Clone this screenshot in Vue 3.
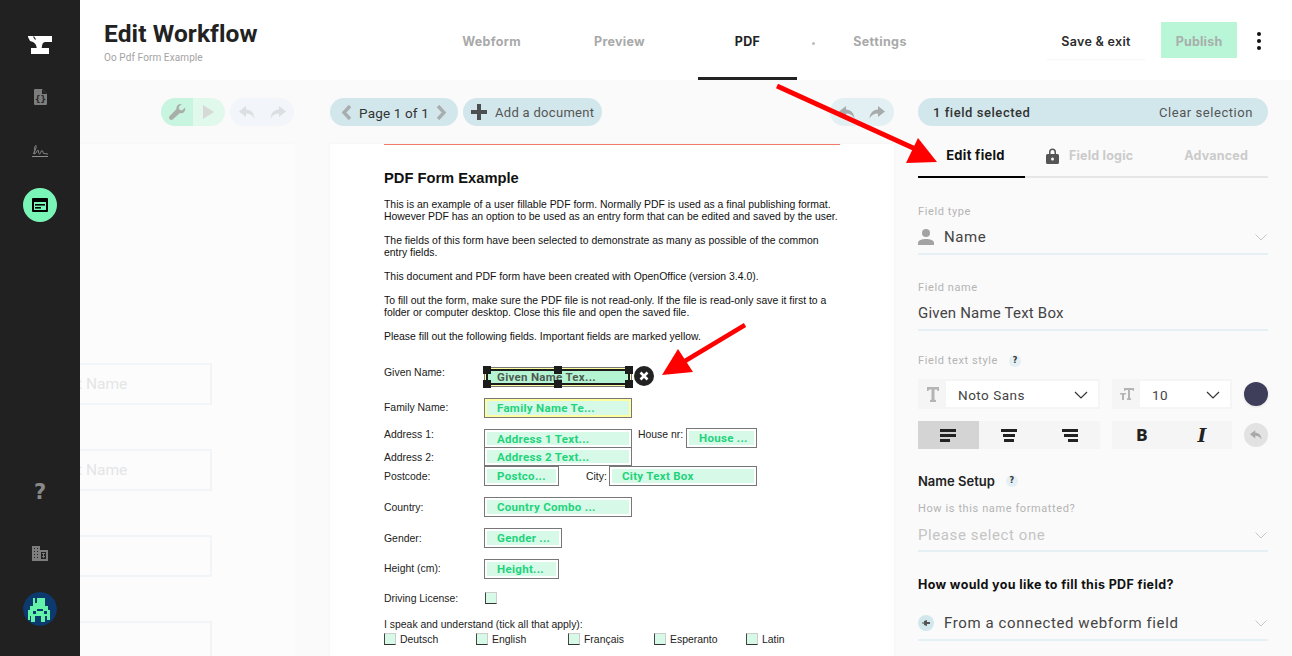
<script setup>
const tabs = [
  { label: 'Webform', cls: '' },
  { label: 'Preview', cls: '' },
  { label: 'PDF', cls: 'active' },
  { label: 'Settings', cls: 'last' }
]
const fields = [
  { t: 'Family Name Te...', x: 154, y: 254, w: 148, h: 20, yellow: true },
  { t: 'Address 1 Text...', x: 154, y: 285, w: 148, h: 19 },
  { t: 'House ...', x: 356, y: 284, w: 71, h: 20 },
  { t: 'Address 2 Text...', x: 154, y: 303, w: 148, h: 19 },
  { t: 'Postco...', x: 154, y: 322, w: 75, h: 20 },
  { t: 'City Text Box', x: 279, y: 322, w: 148, h: 20 },
  { t: 'Country Combo ...', x: 154, y: 353, w: 148, h: 20 },
  { t: 'Gender ...', x: 154, y: 384, w: 78, h: 20 },
  { t: 'Height...', x: 154, y: 415, w: 75, h: 20 }
]
const labels = [
  { t: 'Given Name:', x: 54, y: 223 },
  { t: 'Family Name:', x: 54, y: 258 },
  { t: 'Address 1:', x: 54, y: 285 },
  { t: 'House nr:', x: 308, y: 285 },
  { t: 'Address 2:', x: 54, y: 308 },
  { t: 'Postcode:', x: 54, y: 327 },
  { t: 'City:', x: 256, y: 327 },
  { t: 'Country:', x: 54, y: 358 },
  { t: 'Gender:', x: 54, y: 389 },
  { t: 'Height (cm):', x: 54, y: 419 },
  { t: 'Driving License:', x: 54, y: 449 },
  { t: 'I speak and understand (tick all that apply):', x: 54, y: 475 },
  { t: 'Deutsch', x: 70, y: 490 },
  { t: 'English', x: 162, y: 490 },
  { t: 'Français', x: 254, y: 490 },
  { t: 'Esperanto', x: 340, y: 490 },
  { t: 'Latin', x: 432, y: 490 }
]
const checks = [
  { x: 155, y: 448 }, { x: 54, y: 489 }, { x: 146, y: 489 },
  { x: 238, y: 489 }, { x: 324, y: 489 }, { x: 416, y: 489 }
]
const handles = [
  [153, 222], [224, 222], [295, 222], [153, 236], [224, 236], [295, 236]
]
const place = (o) => ({ left: o.x + 'px', top: o.y + 'px' })
const box = (f) => ({ left: f.x + 'px', top: f.y + 'px', width: f.w + 'px', height: f.h + 'px' })
</script>

<template>
  <div class="app">
    <aside class="rail">
      <div class="rail-top">
        <svg class="logo" width="24" height="18" viewBox="0 0 24 18"><path d="M0 0H24V6H17C15 6 14 8 13.700 12H21V18H3V12H8.700C8.500 9 7 7 5 6L2 5L0 1Z" fill="#fff"/><path d="M5.500 .5L7.500 3.500" stroke="#212121" stroke-width="1.200"/></svg>
        <svg class="r-ico" width="13" height="16" viewBox="0 0 13 16"><path d="M1 0h7l5 5v10a1 1 0 0 1-1 1H1a1 1 0 0 1-1-1V1a1 1 0 0 1 1-1z" fill="#7d7d7d"/><path d="M8 0v5h5z" fill="#222"/><text x="6.5" y="13" text-anchor="middle" class="brace">{}</text></svg>
        <svg class="r-ico sig" width="16" height="12" viewBox="0 0 16 12"><path d="M1 9C3 7 5 1 4 .5S2 4 2.500 9C4 9 5 5 6 5s0 4 1.500 4S8.500 5.500 10 5.500s.5 3.500 2 3L16 9" fill="none" stroke="#8d8d8d" stroke-width=".9"/><path d="M0 11.500h16" stroke="#8d8d8d"/></svg>
        <div class="r-active">
          <svg width="16" height="14" viewBox="0 0 16 14"><rect width="16" height="14" rx="1" fill="#000"/><rect x="2" y="4" width="12" height="8" fill="#7af5b8"/><rect x="3" y="6" width="10" height="1.600" fill="#000"/><rect x="3" y="9" width="6" height="1.600" fill="#000"/></svg>
        </div>
      </div>
      <div class="rail-bottom">
        <span class="q">?</span>
        <svg class="bld" width="16" height="15" viewBox="0 0 16 15"><path d="M0 0h8v4h8v11H0z" fill="#7d7d7d"/><path d="M2 2h1v1H2zM5 2h1v1H5zM2 5h1v1H2zM5 5h1v1H5zM2 8h1v1H2zM5 8h1v1H5zM2 11h1v1H2zM5 11h1v1H5zM9 6h5v7H9z" fill="#222"/><path d="M10 7h3v1h-3zM10 10h3v1h-3zM11 7h1v5h-1z" fill="#7d7d7d"/></svg>
        <div class="avatar">
          <svg width="34" height="34" viewBox="0 0 34 34"><circle cx="17" cy="17" r="17" fill="#0c3a6e"/><path d="M10 6h2v5h2V6h6v0h0V6h2v5h0v3h3v4h2v10h-3v-4h-2v6h-4v-6h-6v6h-4v-6H7v4H5V18h2v-4h3z" fill="#62f2a8"/><rect x="10" y="19" width="3" height="3" fill="#0c3a6e"/><rect x="21" y="19" width="3" height="3" fill="#0c3a6e"/><rect x="14" y="17" width="6" height="2" fill="#0c3a6e"/></svg>
        </div>
      </div>
    </aside>

    <div class="main">
      <header class="head">
        <div class="title-block">
          <h1>Edit Workflow</h1>
          <p>Oo Pdf Form Example</p>
        </div>
        <nav class="tabs">
          <a v-for="t in tabs" :key="t.label" class="tab" :class="t.cls">{{ t.label }}</a>
          <i class="dot"></i>
        </nav>
        <div class="actions">
          <button class="save">Save &amp; exit</button>
          <button class="publish">Publish</button>
          <span class="more"><i></i><i></i><i></i></span>
        </div>
      </header>

      <div class="body">
        <section class="col-left">
          <div class="toolbar tb-left">
            <div class="pill-tool">
              <span class="tool-a"><svg width="17" height="17" viewBox="0 0 17 17"><path d="M16 3.500l-3 3-2.500-.8L9.700 3l3-3C10 -.5 7 1.500 7.500 5L.7 12c-1 1-1 2.300 0 3.300s2.300 1 3.300 0L11 9c3.500 1 6-2.500 5-5.500z" fill="#a9aeaa"/></svg></span>
              <span class="tool-b"><svg width="12" height="14" viewBox="0 0 12 14"><path d="M0 0l11 7-11 7z" fill="#d6d9d7"/></svg></span>
            </div>
            <div class="pill-undo">
              <svg width="16" height="13" viewBox="0 0 16 13"><path d="M7 0L0 5.500 7 11V7.500c4 0 6.500 1.500 8.500 5C15 7 12 3.500 7 3.500z" fill="#dcdfe1"/></svg>
              <svg width="16" height="13" viewBox="0 0 16 13"><path d="M9 0l7 5.500L9 11V7.500c-4 0-6.500 1.500-8.500 5C1 7 4 3.500 9 3.500z" fill="#dcdfe1"/></svg>
            </div>
          </div>
          <div class="form-panel">
            <div v-for="(n, i) in ['t Name', 't Name', '', '']" :key="i" class="ghost-input"><span>{{ n }}</span></div>
          </div>
        </section>

        <section class="col-mid">
          <div class="toolbar tb-mid">
            <div class="pill page-pill">
              <svg width="11" height="15" viewBox="0 0 11 15"><path d="M9 1L3 7.500 9 14" fill="none" stroke="#a9adaf" stroke-width="3.400"/></svg>
              <span>Page 1 of 1</span>
              <svg width="11" height="15" viewBox="0 0 11 15"><path d="M2 1l6 6.500L2 14" fill="none" stroke="#a9adaf" stroke-width="3.400"/></svg>
            </div>
            <div class="pill add-pill">
              <svg width="16" height="16" viewBox="0 0 16 16"><path d="M6 0h4v6h6v4h-6v6H6v-6H0V6h6z" fill="#4c5053"/></svg>
              <span>Add a document</span>
            </div>
            <div class="pill mid-undo">
              <svg width="16" height="13" viewBox="0 0 16 13"><path d="M7 0L0 5.500 7 11V7.500c4 0 6.500 1.500 8.500 5C15 7 12 3.500 7 3.500z" fill="#a8abac"/></svg>
              <svg width="16" height="13" viewBox="0 0 16 13"><path d="M9 0l7 5.500L9 11V7.500c-4 0-6.500 1.500-8.500 5C1 7 4 3.500 9 3.500z" fill="#a8abac"/></svg>
            </div>
          </div>
          <div class="sheet">
            <div class="rule"></div>
            <h2>PDF Form Example</h2>
            <p>This is an example of a user fillable PDF form. Normally PDF is used as a final publishing format.<br>However PDF has an option to be used as an entry form that can be edited and saved by the user.</p>
            <p>The fields of this form have been selected to demonstrate as many as possible of the common<br>entry fields.</p>
            <p>This document and PDF form have been created with OpenOffice (version 3.4.0).</p>
            <p>To fill out the form, make sure the PDF file is not read-only. If the file is read-only save it first to a<br>folder or computer desktop. Close this file and open the saved file.</p>
            <p>Please fill out the following fields. Important fields are marked yellow.</p>

            <span v-for="l in labels" :key="l.t" class="pdf-label" :style="place(l)">{{ l.t }}</span>
            <div class="field selected"><span>Given Name Tex...</span></div>
            <i v-for="(h, i) in handles" :key="i" class="handle" :style="{ left: h[0] + 'px', top: h[1] + 'px' }"></i>
            <span class="close"><svg width="10" height="10" viewBox="0 0 10 10"><path d="M1.500 1.500l7 7M8.500 1.500l-7 7" stroke="#fff" stroke-width="2.600"/></svg></span>
            <div v-for="f in fields" :key="f.t" class="field" :class="{ yellow: f.yellow }" :style="box(f)"><span>{{ f.t }}</span></div>
            <i v-for="(c, i) in checks" :key="i" class="check" :style="place(c)"></i>
          </div>
        </section>

        <section class="col-right">
          <div class="sel-bar"><span class="sel-a">1 field selected</span><span class="sel-b">Clear selection</span></div>
          <div class="rtabs">
            <span class="rtab on">Edit field</span>
            <span class="rtab lock"><svg width="13" height="16" viewBox="0 0 13 16"><path d="M3 6V4a3.500 3.500 0 0 1 7 0v2h1.500A1.500 1.500 0 0 1 13 7.500v7a1.500 1.500 0 0 1-1.500 1.500h-10A1.500 1.500 0 0 1 0 14.500v-7A1.500 1.500 0 0 1 1.500 6zm1.500 0h4V4a2 2 0 0 0-4 0z" fill="#555"/><circle cx="6.500" cy="11" r="1.500" fill="#fafafa"/></svg>Field logic</span>
            <span class="rtab adv">Advanced</span>
          </div>

          <label class="lab first">Field type</label>
          <div class="select s-type">
            <svg width="16" height="16" viewBox="0 0 16 16"><circle cx="8" cy="4" r="4" fill="#a3a3a3"/><path d="M0 16v-2c0-3 4-4 8-4s8 1 8 4v2z" fill="#a3a3a3"/></svg>
            <span class="val">Name</span>
            <svg class="chev" width="12" height="7" viewBox="0 0 12 7"><path d="M.5.5L6 6l5.500-5.500" fill="none" stroke="#c6c6c6"/></svg>
          </div>

          <label class="lab second">Field name</label>
          <div class="select plain"><span class="val">Given Name Text Box</span></div>

          <div class="lab-row third"><label class="lab">Field text style</label><i class="help">?</i></div>
          <div class="style-grid">
            <div class="sel-box">
              <span class="sb-ico"><svg width="12" height="15" viewBox="0 0 12 15"><path d="M0 0h12v4h-1.500L10 2.500H7.500v10l1.500.7V15H3v-1.800l1.500-.7v-10H2L1.500 4H0z" fill="#b4b4b4"/></svg></span>
              <span class="sb-val">Noto Sans<svg width="14" height="8" viewBox="0 0 14 8"><path d="M1 1l6 6 6-6" fill="none" stroke="#333" stroke-width="1.200"/></svg></span>
            </div>
            <div class="sel-box">
              <span class="sb-ico"><svg width="14" height="12" viewBox="0 0 14 12"><path d="M4 0h10v3h-1l-.5-1H10v8l1 .5V12H7v-1.500l1-.5V2H5.500L5 3H4zM0 5h6v1.500H4V12H2V6.500H0z" fill="#b4b4b4"/></svg></span>
              <span class="sb-val">10<svg width="14" height="8" viewBox="0 0 14 8"><path d="M1 1l6 6 6-6" fill="none" stroke="#333" stroke-width="1.200"/></svg></span>
            </div>
            <span class="swatch"></span>
            <div class="seg">
              <span class="on"><svg width="16" height="13" viewBox="0 0 16 13"><path d="M0 0h16v3H0zM0 5h16v3H0zM0 10h10v3H0z" fill="#222"/></svg></span>
              <span><svg width="16" height="13" viewBox="0 0 16 13"><path d="M0 0h16v3H0zM2 5h12v3H2zM3 10h10v3H3z" fill="#222"/></svg></span>
              <span><svg width="16" height="13" viewBox="0 0 16 13"><path d="M0 0h16v3H0zM2 5h14v3H2zM6 10h10v3H6z" fill="#222"/></svg></span>
            </div>
            <div class="seg">
              <span class="bi b">B</span>
              <span class="bi i">I</span>
            </div>
            <span class="undo-round"><svg width="12" height="10" viewBox="0 0 16 13"><path d="M7 0L0 5.500 7 11V7.500c4 0 6.500 1.500 8.500 5C15 7 12 3.500 7 3.500z" fill="#a8a8a8"/></svg></span>
          </div>

          <div class="lab-row setup"><strong>Name Setup</strong><i class="help">?</i></div>
          <label class="lab fmt">How is this name formatted?</label>
          <div class="select thin"><span class="val ph">Please select one</span><svg class="chev" width="12" height="7" viewBox="0 0 12 7"><path d="M.5.5L6 6l5.500-5.500" fill="none" stroke="#c6c6c6"/></svg></div>

          <strong class="fill-q">How would you like to fill this PDF field?</strong>
          <div class="select s-fill"><span class="plug"><svg width="8" height="6" viewBox="0 0 8 6"><path d="M0 2.500h2V1l3-1v2h3v2H5v2L2 5V3.500H0z" fill="#555"/></svg></span><span class="val">From a connected webform field</span><svg class="chev" width="12" height="7" viewBox="0 0 12 7"><path d="M.5.5L6 6l5.500-5.500" fill="none" stroke="#c6c6c6"/></svg></div>
        </section>
      </div>
    </div>

    <svg class="arrows" width="1292" height="656" viewBox="0 0 1292 656">
      <path d="M777 86L922 152" stroke="#f00" stroke-width="5"/>
      <path d="M906 163L918 138 937 162z" fill="#f00"/>
      <path d="M745 325L680 364" stroke="#f00" stroke-width="4.500"/>
      <path d="M662 375L678 349 693 372z" fill="#f00"/>
    </svg>
  </div>
</template>

<style>
html, body { margin: 0; background: #fff; }
</style>

<style scoped>
.app { position: relative; display: flex; width: 1292px; height: 656px; overflow: hidden; font-family: Roboto, "Liberation Sans", sans-serif; color: #222; }
.rail { flex: 0 0 80px; background: #212121; display: flex; flex-direction: column; align-items: center; justify-content: space-between; box-sizing: border-box; padding: 36px 0 30px; }
.rail-top, .rail-bottom { display: flex; flex-direction: column; align-items: center; }
.r-ico { margin-top: 35px; }
.r-ico.sig { margin-top: 40px; }
.brace { font: 700 9px "DejaVu Sans Mono", monospace; fill: #222; }
.r-active { width: 34px; height: 34px; border-radius: 50%; background: #7af5b8; margin-top: 31px; display: flex; align-items: center; justify-content: center; }
.q { font: 700 21px/24px "DejaVu Sans", sans-serif; color: #8a8a8a; }
.bld { margin-top: 42px; }
.avatar { width: 34px; height: 34px; margin-top: 31px; border-radius: 50%; overflow: hidden; }
.main { flex: 1; display: flex; flex-direction: column; min-width: 0; }
.head { height: 80px; flex: none; background: #fff; position: relative; display: flex; align-items: flex-start; }
.title-block { margin-left: 24px; width: 300px; padding-top: 20px; }
h1 { margin: 0; font: 700 24.500px/28px Roboto, sans-serif; letter-spacing: .1px; color: #222; }
.title-block p { margin: 3px 0 0; font: 400 10px/14px Roboto, sans-serif; letter-spacing: .1px; color: #a3a3a3; }
.tabs { position: absolute; left: 362px; top: 0; height: 80px; display: flex; gap: 29px; }
.tab { display: flex; align-items: center; justify-content: center; width: 99px; height: 80px; box-sizing: border-box; padding-top: 2px; font: 700 12.500px Inter, sans-serif; letter-spacing: .3px; color: #a9a9a9; }
.tab.active { border-bottom: 3px solid #222; padding-top: 5px; color: #222; }
.tab.last { padding-left: 9px; letter-spacing: .4px; }
.dot { position: absolute; left: 370px; top: 42px; width: 3px; height: 3px; border-radius: 50%; background: #bbb; }
.actions { position: absolute; left: 967px; top: 22px; display: flex; align-items: flex-start; }
.save { width: 98px; height: 37px; border: 0; background: #fff; box-shadow: 0 1px 1px #f7f7f7; font: 600 12.500px Inter, sans-serif; letter-spacing: .3px; color: #2b2b2b; padding: 2px 0 0; }
.publish { width: 76px; height: 36px; margin-left: 16px; border: 0; background: #b9f6d8; font: 700 12.500px Inter, sans-serif; letter-spacing: .2px; color: #a8aeaa; padding: 2px 0 0; }
.more { display: flex; flex-direction: column; gap: 3px; margin: 10px 0 0 20px; }
.more i { width: 4px; height: 4px; border-radius: 50%; background: #111; }
.body { flex: 1; min-height: 0; background: #fafafa; display: flex; position: relative; }
.col-left { width: 215px; flex: none; overflow: hidden; }
.toolbar { height: 28px; margin-top: 18px; display: flex; }
.tb-left { justify-content: flex-end; gap: 5px; padding-right: 1px; }
.pill-tool { display: flex; border-radius: 14px; overflow: hidden; }
.tool-a, .tool-b { width: 32px; display: flex; align-items: center; justify-content: center; }
.tool-a { background: #c8f5df; }
.tool-b { background: #e1f8ed; }
.pill-undo { width: 64px; border-radius: 14px; background: #f2f5f9; display: flex; align-items: center; justify-content: space-around; padding: 0 1px; box-sizing: border-box; }
.form-panel { height: 512px; margin-top: 18px; background: #fcfcfc; box-shadow: 0 0 2px #f6f6f6; padding-top: 219px; box-sizing: border-box; }
.ghost-input { width: 132px; height: 42px; box-sizing: border-box; border: 2px solid #f2f5f8; border-left: 0; margin-bottom: 44px; display: flex; align-items: center; font: 400 15.500px Roboto, sans-serif; color: #e4e5e6; overflow: hidden; white-space: nowrap; }
.ghost-input span { margin-left: -3px; }
.col-mid { width: 564px; margin-left: 35px; flex: none; }
.tb-mid { gap: 5px; }
.pill { height: 28px; border-radius: 14px; background: #d2e7ec; display: flex; align-items: center; box-sizing: border-box; }
.page-pill { width: 128px; padding: 1px 11px 0; justify-content: space-between; color: #333; }
.page-pill span { font: 400 13.500px Roboto, sans-serif; letter-spacing: .15px; }
.page-pill svg { margin-top: -1px; }
.add-pill { width: 139px; padding: 1px 0 0 8px; gap: 8px; font: 400 13px Roboto, sans-serif; letter-spacing: .3px; color: #555; }
.add-pill svg { margin-top: -1px; }
.mid-undo { width: 64px; margin-left: auto; background: #e3f0f3; justify-content: space-around; padding: 0 2px; }
.sheet { position: relative; height: 512px; margin-top: 18px; background: #fff; box-sizing: border-box; padding: 0 54px; box-shadow: 0 0 3px #f2f2f2; overflow: hidden; font-family: "Liberation Sans", Arial, sans-serif; color: #111; }
.rule { height: 1px; background: #ef7b68; width: 456px; }
h2 { margin: 24px 0 12px; font: 700 14.700px/18px "Liberation Sans", sans-serif; color: #111; }
.sheet p { margin: 0 0 12px; font-size: 10.430px; line-height: 12px; white-space: nowrap; }
.pdf-label { position: absolute; font-size: 10.430px; line-height: 12px; white-space: nowrap; color: #222; }
.field { position: absolute; box-sizing: border-box; border: 1px solid #777; padding: 2px; background: #fff; }
.field span { display: block; height: 100%; background: #d7f9e8; padding-left: 10px; font: 700 11.500px/15px Roboto, sans-serif; letter-spacing: .3px; color: #1fd37c; white-space: nowrap; overflow: hidden; }
.field.yellow { background: #ffffa0; }
.field.selected { left: 154px; top: 223px; width: 148px; height: 20px; background: #ffffa0; padding: 1px; }
.field.selected span { box-sizing: border-box; border: 2px solid #1c1c1c; background: #b5f4d2; color: #4d5a52; line-height: 12px; padding-left: 9px; }
.handle { position: absolute; width: 8px; height: 8px; background: #1c1c1c; z-index: 2; }
.close { position: absolute; left: 304px; top: 222px; width: 20px; height: 20px; border-radius: 50%; background: #222; display: flex; align-items: center; justify-content: center; }
.check { position: absolute; width: 12px; height: 12px; box-sizing: border-box; background: #d7f9e8; border-left: 1px solid #444; border-bottom: 1px solid #333; border-top: 1px solid #ccc; border-right: 1px solid #ccc; }
.col-right { width: 350px; margin-left: 24px; flex: none; }
.sel-bar { height: 28px; margin-top: 18px; border-radius: 14px; background: #d2e7ec; display: flex; justify-content: space-between; align-items: center; padding: 1px 15px 0; box-sizing: border-box; font: 500 13px Roboto, sans-serif; letter-spacing: .55px; }
.sel-a { color: #333; }
.sel-b { color: #555; font-weight: 400; }
.rtabs { height: 36px; margin-top: 14px; display: flex; border-bottom: 2px solid #e6e6e6; }
.rtab { font: 700 12.500px/16px Inter, sans-serif; letter-spacing: .2px; color: #cbcbcb; display: flex; align-items: center; height: 36px; box-sizing: border-box; padding-bottom: 4px; }
.rtab.on { width: 107px; height: 38px; border-bottom: 2px solid #000; padding: 0 0 6px 8px; font-size: 13px; letter-spacing: .3px; color: #111; justify-content: center; }
.rtab.lock { margin-left: 21px; gap: 10px; }
.rtab.adv { margin-left: 51px; }
.lab { display: block; font: 400 11px/14px Roboto, sans-serif; letter-spacing: .6px; color: #b4b4b4; }
.lab.first { margin-top: 27px; }
.lab.second { margin-top: 26px; }
.select { display: flex; align-items: center; position: relative; height: 26px; padding-bottom: 3px; border-bottom: 2px solid #e4f0f3; }
.s-type { margin-top: 5px; }
.select .val { font: 400 15px/18px Roboto, sans-serif; letter-spacing: .6px; color: #444; margin-left: 10px; }
.select.plain { margin-top: 5px; }
.select.plain .val { margin-left: 0; letter-spacing: .2px; }
.select .val.ph { margin-left: 0; color: #c4c4c4; }
.chev { position: absolute; right: 1px; top: 10px; }
.lab-row { display: flex; align-items: center; gap: 11px; }
.third { margin-top: 23px; }
.help { width: 12px; height: 12px; border-radius: 50%; background: #e4f0f3; font: 700 8px/12px "DejaVu Sans", sans-serif; text-align: center; color: #333; }
.style-grid { display: grid; grid-template-columns: 182px 120px 24px; column-gap: 12px; row-gap: 12px; margin-top: 11px; align-items: center; }
.sel-box { height: 30px; background: #f5f5f5; display: flex; box-sizing: border-box; padding: 2px; }
.sb-ico { width: 26px; display: flex; align-items: center; justify-content: center; }
.sb-val { flex: 1; background: #fff; display: flex; align-items: center; justify-content: space-between; padding: 1px 10px 0 12px; font: 400 13.500px Roboto, sans-serif; letter-spacing: .5px; color: #444; }
.swatch { width: 24px; height: 24px; border-radius: 50%; background: #3e3d5a; box-shadow: 0 1px 3px #e2e2e2; }
.seg { height: 28px; background: #f5f5f5; display: flex; }
.seg span { flex: 1; display: flex; align-items: center; justify-content: center; }
.seg span.on { background: #d4d4d4; }
.bi { font: 900 17px Roboto, sans-serif; color: #222; }
.bi.i { font: italic 900 19px "DejaVu Serif", serif; }
.undo-round { width: 24px; height: 24px; border-radius: 50%; background: #e2e2e2; display: flex; align-items: center; justify-content: center; }
.setup { margin-top: 24px; }
.setup strong { font: 600 13px/16px Inter, sans-serif; color: #222; }
.lab.fmt { margin-top: 13px; }
.select.thin { margin-top: 6px; padding-bottom: 2px; }
.fill-q { display: block; margin-top: 25px; font: 700 12.500px/16px Inter, sans-serif; letter-spacing: .35px; color: #111; }
.s-fill { margin-top: 17px; }
.plug { width: 16px; height: 16px; border-radius: 50%; background: #d2e7ec; display: flex; align-items: center; justify-content: center; }
.arrows { position: absolute; left: 0; top: 0; pointer-events: none; }
</style>
